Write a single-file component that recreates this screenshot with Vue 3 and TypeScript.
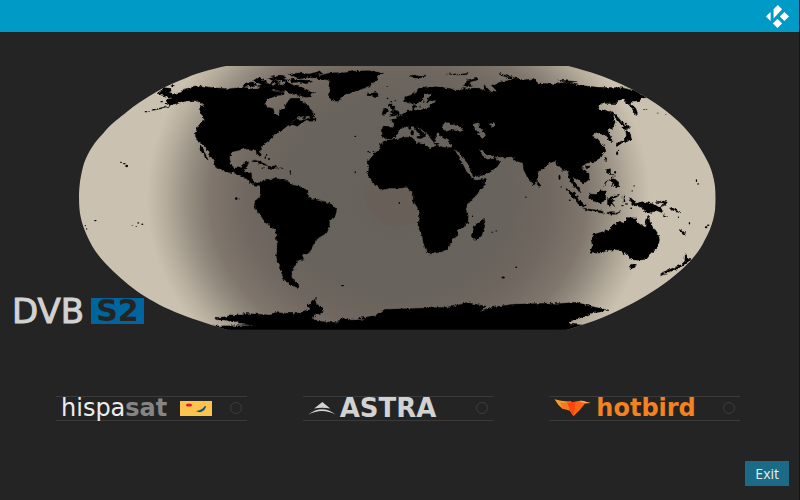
<script setup lang="ts">
import { ref } from 'vue'

type Position = 'hispasat' | 'astra' | 'hotbird'

const selected = ref<Position | null>(null)

function leave(): void {
  selected.value = null
}

// Small islands, each [x, y, rx, ry] in map units
const islands: number[][] = [
  [153, 322, 3, 2], [163, 326, 4, 2], [170, 333, 4, 4], [228, 170, 4, 2], [237, 170, 3, 1], [252, 164, 4, 2],
  [499, 431, 4, 4], [508, 432, 2, 1], [76, 497, 4, 2], [187, 511, 3, 1], [205, 504, 3, 2], [217, 508, 3, 2], [199, 515, 3, 1],
  [46, 512, 2, 2], [50, 522, 2, 2], [590, 300, 2, 3], [597, 312, 3, 3], [586, 308, 2, 4], [661, 350, 2, 4], [662, 357, 2, 2],
  [856, 244, 3, 2], [856, 352, 2, 3], [895, 290, 3, 2], [910, 289, 2, 2], [900, 292, 2, 2],
  [952, 94, 3, 1], [953, 130, 3, 2], [964, 140, 3, 2], [976, 137, 2, 2], [988, 444, 2, 3],
  [818, 692, 5, 2], [1300, 668, 5, 3], [1339, 637, 3, 2], [1267, 532, 2, 2], [1279, 528, 2, 2], [1208, 484, 2, 2], [1368, 427, 2, 2],
  [1469, 367, 3, 8], [1474, 396, 2, 2], [1642, 295, 3, 6], [1646, 286, 2, 2], [1668, 206, 3, 3], [1723, 163, 4, 1], [1730, 163, 3, 1],
  [1764, 174, 4, 1], [1788, 179, 2, 1], [1880, 377, 2, 4], [1885, 387, 3, 2], [1687, 408, 2, 2], [1693, 393, 2, 2],
  [1909, 517, 4, 3], [1915, 511, 4, 2], [1859, 505, 2, 4], [1826, 487, 2, 2], [275, 140, 4, 2], [403, 180, 3, 7], [410, 190, 3, 4],
  [1020, 220, 4, 4], [1027, 233, 5, 8], [1050, 247, 10, 4], [1100, 266, 9, 2], [1150, 261, 6, 2],
  [1636, 352, 3, 4], [1644, 384, 3, 5], [1658, 452, 4, 2], [1670, 447, 5, 2], [1684, 460, 3, 2], [1524, 424, 3, 2], [1500, 436, 3, 2]
]
</script>

<template>
  <div class="screen">
    <header class="topbar">
      <svg class="brand" viewBox="138 12 70 70" role="img" aria-label="Kodi">
        <path d="M174 12 187 25 161 53V25ZM152 33V61L138 47ZM194 33 208 47 194 61 180 47ZM173 54 187 68 173 82 159 68Z" />
      </svg>
    </header>

    <main class="content">
      <section class="stage">
        <svg class="map" viewBox="27 33 1911 792" role="img" aria-label="World map">
          <defs>
            <radialGradient id="ocean" gradientUnits="userSpaceOnUse" cx="0" cy="0" r="1" gradientTransform="translate(985 429) scale(755 650)">
              <stop offset="0" stop-color="#675f58" />
              <stop offset=".12" stop-color="#675f58" />
              <stop offset=".14" stop-color="#67625b" />
              <stop offset=".45" stop-color="#68635c" />
              <stop offset=".6" stop-color="#6f6760" />
              <stop offset=".75" stop-color="#80766d" />
              <stop offset=".84" stop-color="#989083" />
              <stop offset=".93" stop-color="#b7ae9e" />
              <stop offset="1" stop-color="#cbc1b0" />
            </radialGradient>
            <clipPath id="globe">
              <path d="M468 33H1495C1560 50 1610 66 1655 88C1715 115 1765 148 1810 185C1855 222 1890 272 1914 320C1930 352 1938 390 1938 430C1938 475 1928 515 1905 555C1882 605 1835 648 1785 685C1730 725 1680 750 1645 767C1600 790 1540 810 1490 825H472C410 805 360 790 315 771C270 752 235 732 200 708C165 682 135 655 108 627C82 600 65 575 50 540C32 500 27 470 27 430C27 390 32 360 42 325C55 290 75 260 100 235C120 210 140 195 162 178C200 145 230 128 260 110C290 92 320 80 350 68C390 50 430 42 468 33Z" />
            </clipPath>
            <filter id="coast" x="0" y="0" width="100%" height="100%">
              <feTurbulence type="fractalNoise" baseFrequency=".09" numOctaves="3" seed="4" />
              <feDisplacementMap in="SourceGraphic" scale="12" xChannelSelector="R" yChannelSelector="G" />
            </filter>
            <mask id="land" maskUnits="userSpaceOnUse" x="0" y="0" width="2000" height="860">
              <g fill="#fff" stroke="#fff" stroke-width="1" filter="url(#coast)">
                <!-- North America -->
                <path d="M262 115 272 107 283 98 300 100 304 108 296 112 312 116 334 112 342 102 362 98 395 93 430 98 475 101 525 97 548 103 580 100 610 108 645 114 640 120 615 122 595 131 581 146 595 157 610 161 614 178 624 181 632 162 644 157 653 140 662 130 690 130 698 143 712 150 718 158 734 176 730 183 705 183 685 187 668 200 655 211 640 222 625 236 612 238 607 250 590 262 574 274 570 288 574 303 566 304 559 284 548 286 532 279 510 285 488 290 479 305 480 328 495 339 512 338 518 325 536 320 530 338 521 348 544 353 546 372 555 386 572 382 570 392 555 391 545 386 530 372 515 362 490 353 475 352 437 337 432 318 420 300 408 278 402 270 394 265 384 260 377 248 376 230 385 212 400 198 402 180 394 170 403 155 395 145 375 137 350 138 325 145 312 147 302 153 288 146 292 133 308 130 298 127 272 119Z" />
                <path d="M325 145 290 155 270 159 245 166 270 162 305 152ZM392 270 399 280 405 294 416 318 408 311 402 296 394 294ZM394 150 407 160 402 170 408 190 401 188 391 168ZM282 115 288 127 280 121ZM303 91 316 93 306 97Z" />
                <path d="M668 200 680 193 698 194 710 184 697 189 700 195 718 189 728 180 738 198 720 199 710 194 697 203 682 214 667 209 657 213Z" />
                <!-- Arctic archipelago -->
                <path d="M520 91 530 84 548 80 560 88 552 96 535 92 520 97ZM550 76 568 68 582 72 571 78 588 75 590 81 574 88 560 82ZM562 93 580 84 595 86 605 82 610 92 622 84 635 92 648 80 665 88 688 96 702 98 723 112 738 113 720 119 725 125 708 127 690 122 672 118 655 115 648 109 630 110 612 105 594 108 576 101ZM596 71 612 65 630 63 650 66 640 73 662 76 645 80 627 74 613 79ZM610 76 632 81 620 85 603 83ZM655 58 685 54 718 57 744 50 760 55 745 61 752 65 730 70 716 66 698 71 674 66ZM660 71 686 74 712 76 728 80 708 86 687 80 666 84Z" />
                <!-- Caribbean -->
                <path d="M545 319 555 315 572 321 586 327 597 332 581 330 566 323ZM598 334 615 333 627 339 610 340 594 342ZM574 339 584 338 583 342ZM632 338 642 339 639 342Z" />
                <!-- South America -->
                <path d="M570 386 580 376 595 371 600 376 612 370 638 374 655 380 668 390 690 395 710 405 717 418 715 430 738 432 760 438 785 448 800 463 796 482 779 498 778 517 770 534 752 545 736 554 734 568 720 590 712 597 695 597 701 611 697 617 680 617 677 632 668 633 675 643 665 653 665 667 674 680 690 692 682 698 662 690 650 680 640 671 635 650 628 643 630 630 622 622 620 605 622 570 617 525 600 512 586 503 574 485 560 466 553 455 555 438 569 426 574 410Z" />
                <!-- Greenland and Iceland -->
                <path d="M740 66 755 60 783 53 824 53 860 48 898 47 941 55 923 64 921 78 906 84 899 96 876 101 850 111 825 119 810 134 798 139 780 132 775 118 785 104 777 94 779 76 760 73 740 71ZM889 113 900 116 918 112 927 118 921 125 899 123 890 120Z" />
                <!-- British Isles -->
                <path d="M958 146 968 147 965 153 975 153 973 164 985 169 989 179 970 183 958 184 969 175 961 171 970 164 958 157 954 151ZM940 164 951 161 956 168 950 176 936 179Z" />
                <!-- Western Europe and Scandinavia -->
                <path d="M938 215 972 218 973 205 961 195 981 191 980 184 998 178 1009 169 1030 166 1026 151 1037 151 1041 160 1060 150 1063 128 1045 143 1022 146 1005 142 1004 127 1022 121 1039 110 1050 100 1078 94 1115 97 1143 101 1158 109 1174 101 1230 100V251H1160L1148 248 1132 253 1116 249 1106 234 1099 237 1101 248 1092 263 1080 247 1076 239 1062 229 1047 217 1040 211 1048 224 1064 234 1067 245 1055 246 1041 229 1028 214 1002 216 985 230 978 245 963 252 937 245Z" />
                <!-- Africa -->
                <path d="M932 267 950 256 975 253 1005 247 1032 247 1035 263 1057 268 1081 280 1100 270 1120 277 1150 278 1175 320 1190 350 1214 376 1250 373 1246 391 1227 413 1204 436 1191 453 1188 466 1195 480 1194 503 1177 518 1162 526 1164 542 1148 553 1136 580 1112 592 1080 597 1072 596 1061 564 1056 540 1044 515 1046 493 1051 476 1042 456 1030 438 1030 410 1017 406 1010 397 985 400 962 399 935 405 915 388 904 376 891 361 897 340 894 320 910 300 928 284ZM1243 490 1246 508 1235 543 1224 552 1210 553 1204 540 1212 526 1209 515 1219 508Z" />
                <!-- Asia -->
                <path d="M1130 240 1150 282 1168 292 1190 322 1212 366 1235 361 1260 350 1282 335 1293 319 1280 312 1272 305 1300 307 1325 305 1342 319 1359 324 1362 345 1375 372 1391 390 1402 374 1402 354 1420 341 1435 325 1456 319 1463 331 1480 347 1494 345 1498 370 1505 384 1518 402 1533 414 1528 398 1515 382 1508 366 1518 368 1529 377 1542 386 1557 374 1558 359 1544 347 1536 334 1550 325 1573 320 1594 307 1605 287 1601 272 1583 251 1566 242 1580 232 1598 240 1607 237 1620 261 1630 259 1617 235 1613 225 1628 219 1636 202 1629 175 1606 165 1586 165 1583 158 1594 145 1638 146 1650 134 1665 132 1668 146 1682 153 1699 182 1703 174 1698 160 1681 145 1685 139 1709 137 1716 129 1730 128 1700 107 1655 98 1588 97 1529 91 1490 81 1460 87 1410 85 1388 72 1360 75 1340 68 1316 77 1294 80 1282 88 1264 91 1282 109 1264 111 1253 100 1243 89 1242 104 1215 100 1170 106 1130 106Z" />
                <path d="M1180 91 1190 79 1220 70 1225 74 1202 80 1198 88 1210 94 1192 95ZM1285 55 1302 59 1335 68 1320 69 1296 62ZM1463 74 1492 77 1522 80 1501 84 1480 79ZM1020 62 1036 60 1048 64 1066 59 1071 63 1052 66 1056 71 1038 72ZM1133 57 1145 58 1160 56 1158 59 1176 57 1195 55 1190 59 1160 60Z" />
                <!-- Japan, Sakhalin, Taiwan -->
                <path d="M1620 167 1630 171 1660 205 1662 216 1652 206ZM1656 217 1664 211 1680 216 1671 224 1660 223ZM1667 226 1680 232 1685 251 1673 259 1660 262 1653 266 1642 274 1638 266 1652 260 1664 253 1670 242ZM1606 306 1611 310 1609 321 1604 315ZM1547 334 1561 333 1556 341 1548 341ZM1403 379 1413 391 1408 398 1402 392Z" />
                <!-- Indonesia and the Philippines -->
                <path d="M1488 400 1510 413 1528 434 1547 452 1540 456 1517 438 1500 415ZM1538 459 1558 462 1584 466 1605 471 1600 475 1566 469 1540 463ZM1562 417 1580 419 1594 402 1607 410 1608 431 1596 445 1572 440 1559 430ZM1610 475 1625 473 1640 474 1653 470 1640 478 1624 478ZM1613 431 1618 426 1650 421 1632 431 1622 434 1635 437 1626 442 1636 456 1627 448 1619 455 1613 446ZM1611 342 1622 341 1622 353 1634 364 1623 360 1610 353ZM1631 368 1642 377 1648 395 1639 396 1632 389 1625 393 1630 383 1616 374ZM1616 374 1608 387 1601 395 1609 381ZM1660 420 1666 421 1659 431 1667 439 1659 439ZM1679 431 1695 436 1700 446 1715 440 1740 444 1758 451 1776 462 1779 474 1760 467 1745 476 1727 470 1717 458 1687 449Z" />
                <path d="M1760 440 1780 438 1794 442 1790 449 1770 457 1780 450 1782 444 1760 443ZM1800 457 1814 463 1832 473 1823 473 1807 465ZM1834 523 1850 539 1842 538 1832 528ZM1780 478 1794 485 1782 484Z" />
                <!-- Australia and New Zealand -->
                <path d="M1558 595 1568 575 1564 556 1574 538 1603 529 1622 523 1630 509 1650 500 1661 505 1672 488 1700 489 1698 498 1710 508 1724 518 1731 493 1735 482 1743 506 1750 516 1756 527 1767 543 1769 560 1758 584 1740 600 1729 614 1704 616 1680 612 1671 593 1661 600 1657 589 1646 584 1616 586 1590 594ZM1683 628 1700 629 1695 638 1680 641ZM1846 600 1850 599 1855 612 1864 614 1851 623 1840 632 1823 642 1795 653 1768 660 1780 651 1810 639 1835 629 1845 618Z" />
                <!-- Antarctica -->
                <path d="M427 813 560 812 504 807 506 799 485 801 471 796 437 794 440 788 476 785 471 780 520 780 521 775 600 780 612 773 650 775 681 775 706 770 721 761 708 749 721 746 740 728 737 744 758 761 755 774 738 778 727 789 743 799 775 801 800 803 810 792 833 790 835 796 860 795 890 795 860 791 915 783 940 764 1050 760 1130 757 1155 753 1190 743 1249 754 1229 773 1270 756 1330 748 1405 746 1440 745 1470 746 1520 742 1560 753 1617 766 1565 775 1530 790 1500 799 1500 807 1537 810 1490 835H460Z" />
              </g>
              <g fill="#fff">
                <ellipse v-for="(isle, i) in islands" :key="i" :cx="isle[0]" :cy="isle[1]" :rx="isle[2]" :ry="isle[3]" />
              </g>
              <g fill="#000" filter="url(#coast)">
                <!-- Baltic, Black, Caspian, Aral, Persian Gulf -->
                <path d="M1060 121 1076 115 1083 120 1073 132 1073 141 1105 139 1085 146 1079 157 1060 163 1036 166 1035 157 1052 155 1064 141ZM1118 209 1132 202 1140 209 1155 209 1180 221 1170 228 1149 223 1133 228 1116 222ZM1208 208 1223 203 1231 206 1226 214 1238 226 1248 241 1241 249 1226 242 1224 231 1213 219ZM1258 207 1270 203 1274 210 1268 216 1261 213ZM1228 283 1238 286 1248 299 1268 302 1273 311 1255 313 1238 302Z" />
              </g>
            </mask>
          </defs>
          <g clip-path="url(#globe)">
            <rect x="27" y="33" width="1911" height="792" fill="url(#ocean)" />
            <rect x="27" y="33" width="1911" height="792" fill="#000" mask="url(#land)" />
          </g>
        </svg>

        <div class="standard">
          <span class="dvb">DVB</span>
          <span class="generation">S2</span>
        </div>
      </section>

      <form class="satellites" @submit.prevent>
        <label class="satellite">
          <span class="logo hispasat">
            <span class="word">hispa<b>sat</b></span>
            <svg class="flag" viewBox="0 0 32 15" aria-hidden="true">
              <rect width="32" height="15" fill="#fec34d" />
              <ellipse cx="9" cy="4" rx="3" ry="1.6" fill="#e3182b" />
              <path d="M16 10Q22 9 24 6Q26 4 26 6Q25 9 22 10.500Q19 12 16 10Z" fill="#08508f" />
            </svg>
          </span>
          <input v-model="selected" type="radio" name="satellite" value="hispasat" aria-label="hispasat" />
        </label>

        <label class="satellite">
          <span class="logo astra">
            <svg class="peak" viewBox="40 54 80 38" aria-hidden="true">
              <path d="M81 54 104 73Q80 68 57 73ZM40 91Q80 59 120 91Q80 69 40 91Z" />
            </svg>
            <span class="word">ASTRA</span>
          </span>
          <input v-model="selected" type="radio" name="satellite" value="astra" aria-label="ASTRA" />
        </label>

        <label class="satellite">
          <span class="logo hotbird">
            <svg class="bird" viewBox="44 44 110 54" aria-hidden="true">
              <path d="M45 45Q70 53 95 51L99 70 70 74Q54 62 45 45Z" fill="#fb9d2c" />
              <path d="M62 55 99 53 102 96 91 79 70 73Z" fill="#f47b20" />
              <path d="M83 55 118 50 102 96 92 79Z" fill="#ff4510" />
              <path d="M108 54Q121 47 135 51L153 56 136 58Q121 79 102 96Z" fill="#fc6514" />
              <path d="M119 50Q130 48 137 52L153 56 134 56Z" fill="#ffae54" />
            </svg>
            <span class="word">hotbird</span>
          </span>
          <input v-model="selected" type="radio" name="satellite" value="hotbird" aria-label="hotbird" />
        </label>
      </form>

      <footer class="actions">
        <button type="button" class="exit" @click="leave">Exit</button>
      </footer>
    </main>
  </div>
</template>

<style>
body {
  margin: 0;
  background: #242424;
}
</style>

<style scoped>
.screen {
  box-sizing: border-box;
  display: flex;
  flex-direction: column;
  min-height: 100vh;
  background: #242424;
  border-right: 1px solid #151515;
  font-family: "Open Sans", "Noto Sans", sans-serif;
}

.topbar {
  display: flex;
  align-items: center;
  justify-content: flex-end;
  height: 32px;
  padding-right: 10px;
  background: #009ac7;
}

.brand {
  width: 23px;
  height: 23px;
  fill: #fff;
}

.content {
  flex: 1;
  display: flex;
  flex-direction: column;
}

.stage {
  display: grid;
  padding-top: 34px;
}

.map {
  grid-area: 1 / 1;
  width: 79.7%;
  height: auto;
  margin-left: 79px;
}

.standard {
  grid-area: 1 / 1;
  align-self: end;
  justify-self: start;
  z-index: 1;
  display: flex;
  align-items: center;
  gap: 7px;
  margin: 0 0 6px 12px;
  font-family: "DejaVu Sans", sans-serif;
  line-height: 26px;
}

.dvb {
  color: #d2d2d2;
  font-size: 34px;
  -webkit-text-stroke: 1px #d2d2d2;
}

.generation {
  padding: 0 5px;
  background: #00659f;
  color: #242424;
  font-size: 30px;
  font-weight: 700;
}

.satellites {
  display: grid;
  grid-template-columns: repeat(3, 1fr);
  gap: 56px;
  padding: 66px 59px 0 56px;
}

.satellite {
  box-sizing: border-box;
  display: flex;
  align-items: center;
  justify-content: space-between;
  height: 25px;
  padding: 0 5px;
  border-top: 1px solid #3a3a3a;
  border-bottom: 1px solid #3a3a3a;
}

.satellite input {
  appearance: none;
  box-sizing: border-box;
  width: 12px;
  height: 12px;
  margin: 0;
  border: 1px solid #3d3d3d;
  border-radius: 50%;
}

.satellite input:checked {
  background: #009ac7;
}

.logo {
  display: flex;
  align-items: center;
  font-family: "DejaVu Sans", sans-serif;
  font-size: 24px;
  line-height: 23px;
}

.hispasat {
  gap: 13px;
  color: #ededed;
}

.hispasat b {
  color: #858585;
}

.flag {
  width: 32px;
  height: 15px;
}

.astra {
  gap: 4px;
  color: #d2d2d2;
  font-size: 26px;
  font-weight: 700;
}

.peak {
  width: 28px;
  height: 13px;
  fill: currentColor;
}

.hotbird {
  gap: 5px;
  color: #f58220;
  font-weight: 700;
}

.bird {
  width: 37px;
  height: 18px;
}

.actions {
  display: flex;
  justify-content: flex-end;
  margin-top: auto;
  padding: 0 10px 14px;
}

.exit {
  height: 25px;
  padding: 0 10px;
  border: 0;
  background: #1b6b86;
  color: #e6eef1;
  font-family: inherit;
  font-size: 14px;
  line-height: 25px;
}
</style>
